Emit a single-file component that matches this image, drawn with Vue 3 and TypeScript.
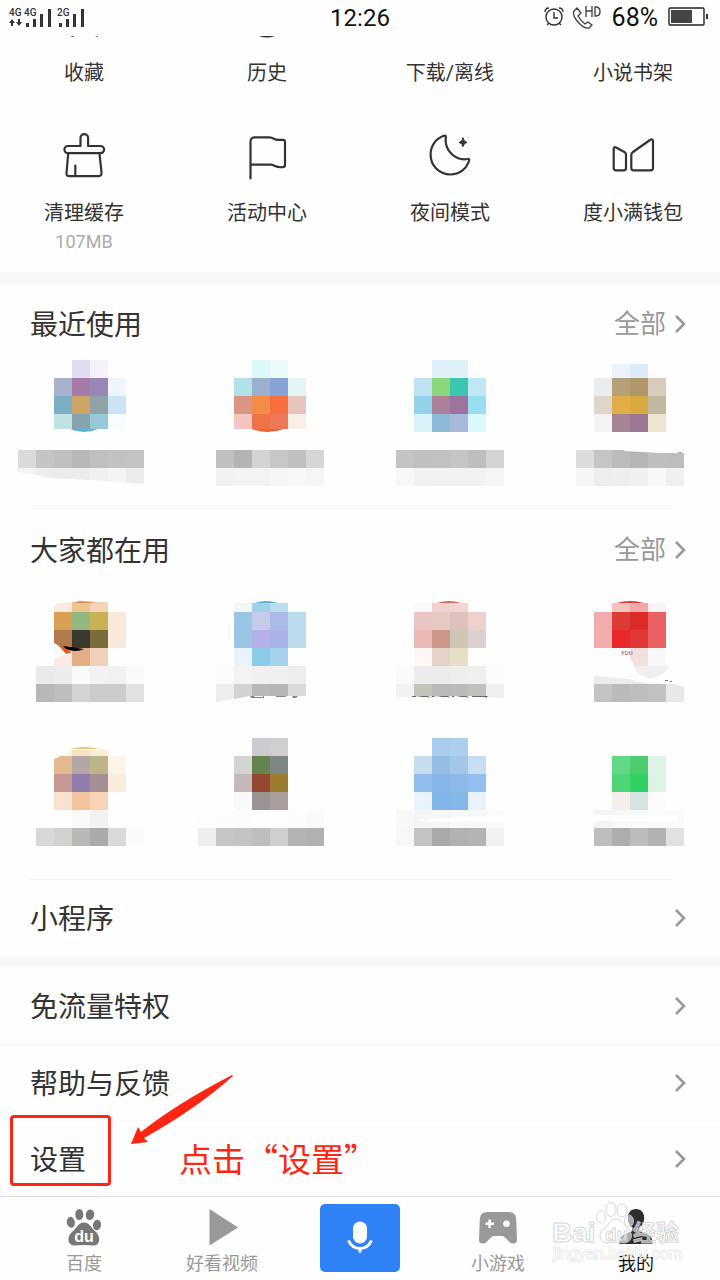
<script setup lang="ts">
interface Strip {
  row: number
  col: number
  colors: string[]
}
interface Mark {
  d: string
  fill: string
}
interface Tile {
  name: string
  strips: Strip[]
  marks?: Mark[]
  note?: string
}
const CELL = 18

function strip(row: number, col: number, colors: string): Strip {
  return { row, col, colors: colors.split(' ') }
}

const paper = '#fefefe'

const recent: Tile[] = [
  {
    name: 'recent-1',
    strips: [
      strip(0, 4, '#e1dcf3 #f5f3f9'),
      strip(1, 3, '#a8b2cc #a57aa7 #9886b5 #f0f4fd'),
      strip(2, 3, '#7cafc6 #cea365 #90a1a8 #cae4f4'),
      strip(3, 3, '#c2e1e3 #86a3af #96c8d7 #f7fcfe'),
      strip(5, 1, '#dadada #c4c4c4 #bfbfbf #b7b7b7 #bfbfbf #c2c2c2 #c3c3c3'),
      strip(6, 1, '#f3f3f3 #ededed #ececec #ebebeb #f0f0f0 #f4f4f4 #ececec'),
    ],
    marks: [
      { d: 'M54 69H126V73H54Z', fill: paper },
      { d: 'M70 69H98Q84 75 70 69Z', fill: '#4eb8e0' },
      { d: 'M18 112L34 114L48 118L90 120L144 124V127H18Z', fill: paper },
    ],
  },
  {
    name: 'recent-2',
    strips: [
      strip(0, 4, '#dcf9f9 #ebfbfc'),
      strip(1, 3, '#b2e2e7 #9cafcc #86a3d6 #e5f5f5'),
      strip(2, 3, '#d99684 #f48b46 #f56e3c #e4c4bd'),
      strip(3, 3, '#f4c5c1 #ef7346 #ef785b #faeee9'),
      strip(5, 2, '#c0c0c0 #b4b4b4 #d3d3d3 #c7c7c7 #c0c0c0 #d6d6d6'),
      strip(6, 2, '#f2f2f2 #f3f3f3 #f3f3f3 #f5f5f5 #f7f7f7 #f5f5f5'),
    ],
    marks: [
      { d: 'M54 69H126V73H54Z', fill: paper },
      { d: 'M72 69H104Q88 75 72 69Z', fill: '#ec633b' },
    ],
  },
  {
    name: 'recent-3',
    strips: [
      strip(0, 4, '#dff0f8 #e0f1f6'),
      strip(1, 3, '#bee2ef #8cd77e #3cc5b0 #c2e7f4'),
      strip(2, 3, '#93d2eb #ae7f98 #9b759f #98deee'),
      strip(3, 3, '#d9f3f8 #8bbad9 #a8badb #dcf8fa'),
      strip(5, 2, '#c4c4c4 #c0c0c0 #c1c1c1 #c5c5c5 #bebebe #d3d3d3'),
      strip(6, 2, '#f7f7f7 #f1f1f1 #f2f2f2 #f2f2f2 #f2f2f2 #f5f5f5'),
    ],
  },
  {
    name: 'recent-4',
    strips: [
      strip(0, 4, '#eaf2fb #dceafa'),
      strip(1, 3, '#ebecee #b5a077 #af9868 #d8cabd'),
      strip(2, 3, '#ded6cb #e0ad46 #d8a941 #c2b89e'),
      strip(3, 3, '#f4f3f2 #a78491 #9c7791 #ede5d1'),
      strip(5, 2, '#dcdcdc #c5c5c5 #bbbbbb #b5b5b5 #bebebe #bdbdbd'),
      strip(6, 2, '#f5f5f5 #ededed #eeeeee #f0f0f0 #f7f7f7 #f0f0f0'),
    ],
    marks: [
      { d: 'M72 0H108V4H72Z', fill: paper },
      { d: 'M84 90H144V93H120L84 91Z', fill: paper },
      { d: 'M139 92H141V93H139Z', fill: '#777' },
    ],
  },
]

const popular: Tile[] = [
  {
    name: 'popular-1',
    strips: [
      strip(0, 3, '#f9ebe2 #edc38e #f4d3b6'),
      strip(1, 3, '#d9a055 #93b77f #c8b254 #f9e9dd'),
      strip(2, 3, '#b17b4c #3a3a2d #7b6d3b #f9e9dd'),
      strip(3, 3, '#faebe4 #e3ad86 #f2d1ba'),
      strip(4, 2, '#eaeaea #ececec #f9fafa #f2f2f2 #f1f1f1 #f9f9f9'),
      strip(5, 2, '#b8b8b8 #bebebe #d3d3d3 #cbcbcb #cbcbcb #e1e1e1'),
    ],
    marks: [
      { d: 'M54 0H108V8H74L58 9L54 12Z', fill: paper },
      { d: 'M54 49L63 54L72 54V58L54 65Z', fill: paper },
      { d: 'M58 51L64 53L72 58L66 60Z', fill: '#e45e1f' },
      { d: 'M63 52L84 55Q76 59 66 55Z', fill: '#000' },
      { d: 'M74 9L79 7L96 8L91 9Z', fill: '#e48b4f' },
    ],
  },
  {
    name: 'popular-2',
    strips: [
      strip(0, 3, '#f1f9f8 #9fd2e9 #b9dded'),
      strip(1, 3, '#9bc5e4 #c7cbea #acbbe5 #badced'),
      strip(2, 3, '#9bc5e4 #b5b0e9 #aab3e8 #badced'),
      strip(3, 3, '#e7f4fb #8bcbe8 #a5d2ed'),
      strip(4, 2, '#fbfbfb #f4f3f4 #f1f0ef #f1f0f1 #ebeeed'),
      strip(5, 2, '#ededed #d2d2d2 #b8b8b8 #b6b6b6 #d9d9d9'),
    ],
    marks: [
      { d: 'M54 0H108V9H54Z', fill: paper },
      { d: 'M75 9Q86 5 98 9Z', fill: '#5cb0cb' },
      { d: 'M36 108L54 105L70 102H126V108Z', fill: paper },
      { d: 'M70 102H74L75 103H83V102H84V104H71ZM88 103H96V102H106V103H88ZM112 102H118L116 104H113Z', fill: '#888' },
    ],
  },
  {
    name: 'popular-3',
    strips: [
      strip(0, 3, '#fafafa #f0d0cf #f1d5d0'),
      strip(1, 3, '#ebc5c3 #e5c9c2 #ddc1bd #efd1cc'),
      strip(2, 3, '#eab9b5 #cc9688 #cdc6b6 #dcd1cf'),
      strip(3, 3, '#fdf8f5 #e5d3c7 #e6dec5'),
      strip(4, 2, '#fafafa #ebecec #eaebeb #eeeeee #efefef #fbfbfb'),
      strip(5, 2, '#f1f1f1 #c2c3bd #b9b9b9 #bababa #c0c0bd #efefef'),
    ],
    marks: [
      { d: 'M54 0H108V9H54Z', fill: paper },
      { d: 'M77 9Q89 5 101 9Z', fill: '#cb6e61' },
      { d: 'M36 103L108 102L144 104V108H36Z', fill: paper },
      { d: 'M52 102H56V103H52ZM58 103L62 102H68L70 104L67 103H62ZM72 102H74V103H72ZM78 103L82 102H88L90 104L87 103H82ZM92 102H94V103H92ZM97 103L101 102H107L109 104L106 103H101ZM112 102H128L126 104L125 103H112Z', fill: '#666' },
    ],
  },
  {
    name: 'popular-4',
    strips: [
      strip(0, 4, '#f4c3c1 #f1a9a8 #f9f3f1'),
      strip(1, 3, '#f2acae #dc3b36 #dc2b28 #e96261'),
      strip(2, 3, '#f2acae #e8282b #e33838 #e96261'),
      strip(3, 5, '#f1e0e0 #f8f8f8'),
      strip(4, 3, '#ebebec #ebebeb #ebebec #efefef'),
      strip(5, 3, '#c2c3c5 #b9babc #bcbdbf #c2c2c4 #e8e8e8'),
    ],
    marks: [
      { d: 'M54 0H126V9H54Z', fill: paper },
      { d: 'M76 9Q91 5 104 9Z', fill: '#dc3d3b' },
      { d: 'M90 54V63L96 77Q109 90 126 77V90L97 88L90 85L54 82V54Z', fill: paper },
      { d: 'M90 54H108V72H96Z', fill: '#f1e0e0' },
      { d: 'M94 72H130Q114 93 98 78Z', fill: '#efefef' },
      { d: 'M126 90H144V93L136 90Z', fill: paper },
      { d: 'M125 86H128V87H125ZM130 87H132V88H130Z', fill: '#777' },
    ],
    note: 'YOU',
  },
  {
    name: 'popular-5',
    strips: [
      strip(0, 3, '#fff7ed #f6e2be #faedd6'),
      strip(1, 3, '#e5b98f #b4a5a6 #bdb489 #fcf3eb'),
      strip(2, 3, '#c69896 #927cab #a58f94 #f9ecdd'),
      strip(3, 3, '#f7e3d0 #f1c49d #f6d4b5'),
      strip(4, 4, '#f9f9f9 #f2f2f1'),
      strip(5, 2, '#d8d8d6 #d2d2cf #b8b8b8 #aaaaaa #d9d9d9 #fafafa'),
    ],
    marks: [
      { d: 'M54 0H108V12H70L57 20L54 21Z', fill: paper },
      { d: 'M70 11Q84 7 100 11Z', fill: '#e6c47b' },
    ],
  },
  {
    name: 'popular-6',
    strips: [
      strip(0, 4, '#cbcccf #cfcfcf'),
      strip(1, 3, '#d4d5d0 #64834f #7e8784'),
      strip(2, 3, '#c5b8b8 #944831 #9b7c31'),
      strip(3, 3, '#f9f9fa #9b9495 #aa9d9d'),
      strip(4, 1, '#fdfdfd #fcfcfc #fcfcfc #fdfdfd #fdfdfd #fcfcfc #fafafa'),
      strip(5, 1, '#eeeeee #c6c6c6 #c4c4c4 #bebebe #cfcfcf #b3b3b3 #b1b1b1'),
    ],
  },
  {
    name: 'popular-7',
    strips: [
      strip(0, 4, '#a9cdef #accff0'),
      strip(1, 3, '#c6dded #95bee4 #a4c6e9 #c7ddf1'),
      strip(2, 3, '#91beed #88b5e9 #8cb9e5 #92bff0'),
      strip(3, 3, '#e9f3fb #82b6e8 #84b6e8 #e9f3fb'),
      strip(4, 2, '#f8f8f8 #f5f5f5 #f5f5f5 #f8f8f8 #f8f8f8 #fafafa'),
      strip(5, 2, '#f7f7f7 #c3c3c3 #a9a9a9 #b1b1b1 #b4b4b4 #f1f1f1'),
    ],
    marks: [{ d: 'M54 82L144 77V83L72 84Z', fill: paper }],
  },
  {
    name: 'popular-8',
    strips: [
      strip(1, 4, '#60d985 #4dce6e #dff4e6'),
      strip(2, 4, '#4dd577 #30d160 #dcf3e5'),
      strip(3, 4, '#f4efed #d6e5e1 #fcfcfc'),
      strip(4, 3, '#f4f4f4 #f8f8f8 #f9f9f9 #fafafa #fafafa'),
      strip(5, 3, '#bebebe #adadad #bcbcbc #b2b2b2 #e0e2e1'),
    ],
    marks: [{ d: 'M36 79L54 77H138V83H36Z', fill: paper }],
  },
]

const sections = [
  { title: '最近使用', more: '全部', tiles: recent, rows: 7, kind: 'recent' },
  { title: '大家都在用', more: '全部', tiles: popular, rows: 6, kind: 'popular' },
]
const services = ['免流量特权', '帮助与反馈', '设置']
</script>

<template>
  <div class="page">
    <header class="status">
      <svg class="signal" viewBox="0 0 90 36" aria-label="4G 4G 2G">
        <g fill="#333">
          <text x="9" y="16" font-size="10">4G</text>
          <text x="24" y="16" font-size="10">4G</text>
          <text x="57" y="16" font-size="10">2G</text>
          <path d="M12 19l3 4h-2v3h-2v-3h-2zM19 26l-3-4h2v-3h2v3h2z" />
          <path d="M26 23h3v4h-3zM33 19h3v8h-3zM40 14h3v13h-3zM48 9h3v18h-3z" />
          <path d="M59 23h3v4h-3zM66 19h3v8h-3zM73 14h3v13h-3zM81 9h3v18h-3z" />
        </g>
      </svg>
      <time class="clock">12:26</time>
      <div class="device">
        <svg width="20" height="22" viewBox="0 0 20 22" fill="none" stroke="#333" stroke-width="1.4">
          <circle cx="10" cy="11" r="8" />
          <path d="M10 6v6h4M1 6Q1 2 5 2M15 2q4 0 4 4M5 17l-2 2M15 17l2 2" />
        </svg>
        <svg width="30" height="24" viewBox="0 0 30 24" fill="none" stroke="#444" stroke-width="1.4">
          <path d="M2 6L5 3L9 8L6 11Q9 16 13 19L16 17L20 20L17 23Q12 24 6 17Q0 10 2 6Z" stroke-linejoin="round" />
          <path d="M14 1v11M20 1v11M14 6h6M23 2v9h1q4 0 4-4.500t-4-4.500z" />
        </svg>
        <span class="percent">68%</span>
        <svg width="42" height="20" viewBox="0 0 42 20">
          <rect x="1" y="1" width="35" height="17" rx="1" fill="none" stroke="#222" stroke-width="1.4" />
          <rect x="3" y="3" width="21" height="13" fill="#444" />
          <path d="M38 7h2v5h-2z" fill="#333" />
        </svg>
      </div>
    </header>

    <main>
      <nav class="shortcuts trimmed" aria-label="收藏与历史">
        <button type="button">
          <svg width="48" height="3" viewBox="0 0 48 3"><path d="M11 0l4 0-3 1zM35 0h3l0 1z" fill="#333" /></svg>
          <span>收藏</span>
        </button>
        <button type="button">
          <svg width="48" height="3" viewBox="0 0 48 3"><path d="M16 0H32Q24 3 16 0Z" fill="#333" /></svg>
          <span>历史</span>
        </button>
        <button type="button"><svg width="48" height="3" viewBox="0 0 48 3" /><span>下载/离线</span></button>
        <button type="button"><svg width="48" height="3" viewBox="0 0 48 3" /><span>小说书架</span></button>
      </nav>

      <nav class="shortcuts" aria-label="常用功能">
        <button type="button">
          <svg class="line-icon" viewBox="0 0 48 48">
            <path d="M20.500 14V6a3.800 3.800 0 0 1 7.600 0V14H40.500a3.600 3.600 0 0 1 0 7.200H8a3.600 3.600 0 0 1 0-7.200Z" />
            <path d="M8.200 21.500L6.500 41Q6.300 44.200 9.500 44.200H38Q41.800 44.200 41.500 40.500L39.500 21.500M15.300 33.500V44" />
          </svg>
          <span>清理缓存</span>
          <small>107MB</small>
        </button>
        <button type="button">
          <svg class="line-icon" viewBox="0 0 48 48">
            <path d="M7.500 46.500V10Q7.500 5.300 12 5.300H26Q29 5.300 31 6.800Q33 8 36 7.800H40Q42 7.800 42 10V33Q42 35.200 39.500 35.200Q35 35.500 32 34L29 32.700H8" />
          </svg>
          <span>活动中心</span>
        </button>
        <button type="button">
          <svg class="line-icon" viewBox="0 0 48 48">
            <path d="M19.800 4.800Q20 3 17.800 3.800C9 7 4.600 14.500 4.600 22.500C4.600 34 13.500 42.500 24.500 42.500C33.500 42.500 40.500 37 43.100 28.500Q43.600 26.500 41.500 27C30 29 18 19 19.800 4.800Z" />
            <path d="M37 6Q37.600 9.800 41 10.400Q37.600 11 37 14.700Q36.400 11 33 10.400Q36.400 9.800 37 6Z" fill="#333" stroke-width="1" />
          </svg>
          <span>夜间模式</span>
        </button>
        <button type="button">
          <svg class="line-icon" viewBox="0 0 48 48">
            <path d="M4.700 17Q4.700 14.500 7 15.500L15.400 20Q17 21 17 22.500V36Q17 38.300 14.700 38.300H7Q4.700 38.300 4.700 36Z" />
            <path d="M22.300 23Q22.300 21 24 20L41 8Q44 6.300 44 9.500V36Q44 38.300 41.700 38.300H24.600Q22.300 38.300 22.300 36Z" />
          </svg>
          <span>度小满钱包</span>
        </button>
      </nav>

      <div class="band"></div>

      <section v-for="s in sections" :key="s.kind" :class="['apps', s.kind]">
        <div class="head">
          <h2>{{ s.title }}</h2>
          <button type="button" class="more">
            {{ s.more }}
            <svg class="chevron" viewBox="0 0 12 22"><path d="M2 3L10 11L2 19" /></svg>
          </button>
        </div>
        <div class="tiles">
          <svg v-for="t in s.tiles" :key="t.name" width="180" :height="s.rows * CELL" :viewBox="`0 0 180 ${s.rows * CELL}`">
            <g v-for="(st, i) in t.strips" :key="i" shape-rendering="crispEdges">
              <rect
                v-for="(c, j) in st.colors"
                :key="j"
                :x="(st.col + j) * CELL"
                :y="st.row * CELL"
                :width="CELL"
                :height="CELL"
                :fill="c"
              />
            </g>
            <path v-for="(m, i) in t.marks" :key="`m${i}`" :d="m.d" :fill="m.fill" />
            <text v-if="t.note" x="81" y="61" font-size="6" fill="#a33">{{ t.note }}</text>
          </svg>
        </div>
      </section>

      <button type="button" class="row programs">
        <span>小程序</span>
        <svg class="chevron" viewBox="0 0 12 22"><path d="M2 3L10 11L2 19" /></svg>
      </button>
      <div class="band thin"></div>

      <div class="services">
        <button v-for="name in services" :key="name" type="button" class="row">
          <span>{{ name }}</span>
          <svg class="chevron" viewBox="0 0 12 22"><path d="M2 3L10 11L2 19" /></svg>
        </button>
        <div class="frame"></div>
        <svg class="arrow" viewBox="0 0 104 72">
          <path d="M1 69L8 52L11 57Q46 29 102 0L103 1Q66 34 14 63L18 67Z" fill="#ff2512" />
        </svg>
        <p class="hint">点击“设置”</p>
      </div>
    </main>

    <footer class="tabs">
      <button type="button">
        <svg class="tab-icon" viewBox="0 0 40 40" fill="#777">
          <ellipse cx="6.800" cy="15.300" rx="4" ry="5.500" transform="rotate(-10 6.8 15.3)" />
          <ellipse cx="15.300" cy="7.500" rx="4" ry="5.600" />
          <ellipse cx="26" cy="7.800" rx="4.200" ry="5.400" transform="rotate(10 26 7.8)" />
          <ellipse cx="33" cy="18" rx="4" ry="5.300" transform="rotate(10 33 18)" />
          <path d="M20 15.500C14 15.500 13 21 8 25C2 30 4 38.500 10 38.500Q20 37.500 30 38.500C36 38.500 37 30 32 25C27 21 26 15.500 20 15.500Z" />
          <text x="20" y="35" class="du" text-anchor="middle">du</text>
        </svg>
        <span>百度</span>
      </button>
      <button type="button">
        <svg class="tab-icon" viewBox="0 0 40 40"><path d="M7.500 2L36 20.500L7.500 38.500Z" fill="#999" /></svg>
        <span>好看视频</span>
      </button>
      <button type="button" class="mic" aria-label="语音">
        <svg width="40" height="40" viewBox="0 0 40 40">
          <rect x="13" y="3.500" width="14" height="22" rx="7" fill="#fff" />
          <path d="M8.500 22.500Q12 30.500 20 30.500Q28 30.500 31.500 22.500M20 30V34.500" fill="none" stroke="#fff" stroke-width="3" />
        </svg>
      </button>
      <button type="button">
        <svg class="tab-icon" viewBox="0 0 40 40">
          <path d="M9 5H31Q37.500 5 38.200 12L39 33Q39 36.500 35 36.500Q32 36.500 30 33.500Q26 29 24.500 29H15.500Q14 29 10 33.500Q8 36.500 5 36.500Q1 36.500 1 33L1.800 12Q2.500 5 9 5Z" fill="#999" />
          <path d="M11.700 12.500V21M7.500 16.700H16" stroke="#fff" stroke-width="2.600" />
          <circle cx="28.500" cy="16.700" r="3.300" fill="#fff" />
        </svg>
        <span>小游戏</span>
      </button>
      <button type="button" class="active">
        <svg class="tab-icon" viewBox="0 0 40 40" fill="#2d2d2d">
          <path d="M20 2C14.500 2 11.800 6 11.800 11C11.800 15.500 14 19 16.500 20.500V24L7 28Q3.500 30 3.500 37H36.500Q36.500 30 33 28L23.500 24V20.500C26 19 28.200 15.500 28.200 11C28.200 6 25.500 2 20 2Z" />
        </svg>
        <span>我的</span>
      </button>
      <svg class="watermark" viewBox="0 0 140 70" aria-hidden="true">
        <g fill="#fff" fill-opacity=".6" stroke="#ccc" stroke-opacity=".8">
          <ellipse cx="56" cy="19" rx="4.500" ry="6" />
          <ellipse cx="66" cy="11.500" rx="5" ry="7" />
          <ellipse cx="77" cy="12.500" rx="5" ry="6.500" />
          <ellipse cx="84" cy="23" rx="4.500" ry="6" />
          <path d="M71 21C65 21 64 27 60 30C52 34 54 45 63 45Q71 43 78 45C88 45 89 35 82 30C78 27 77 21 71 21Z" />
          <text x="7" y="44" class="wm-brand">Bai</text>
          <text x="60" y="43" class="wm-du">du</text>
          <text x="88" y="43" class="wm-cjk">经验</text>
        </g>
        <text x="8" y="61" class="wm-url">jingyan.baidu.com</text>
      </svg>
    </footer>
  </div>
</template>

<style>
body {
  background: #fefefe;
}
</style>

<style scoped>
.page {
  min-height: 100vh;
  display: flex;
  flex-direction: column;
  background: #fefefe;
  color: #333;
  font-family: Roboto, "Noto Sans CJK SC", sans-serif;
}
main {
  flex: 1;
}
button {
  border: 0;
  padding: 0;
  margin: 0;
  background: none;
  font: inherit;
  color: inherit;
}
svg {
  display: block;
  flex: none;
}
.status {
  height: 36px;
  display: grid;
  grid-template-columns: 1fr auto 1fr;
  align-items: center;
  color: #111;
  font-size: 24px;
  line-height: 36px;
}
.signal {
  width: 90px;
  height: 36px;
  font-weight: 500;
}
.device {
  display: flex;
  justify-content: flex-end;
  align-items: center;
  padding-right: 10px;
}
.device svg {
  margin-bottom: 2px;
}
.device svg + svg {
  margin-left: 8px;
}
.percent {
  margin: 0 10px;
  font-size: 25px;
}
.shortcuts {
  display: flex;
  justify-content: space-between;
  padding: 46px 32px 16px 29px;
}
.shortcuts.trimmed {
  padding-top: 0;
  padding-bottom: 0;
}
.shortcuts button {
  width: 110px;
  display: flex;
  flex-direction: column;
  align-items: center;
  font-size: 20px;
  line-height: 28px;
}
.shortcuts span {
  margin-top: 19px;
  white-space: nowrap;
}
.shortcuts small {
  margin-top: 3px;
  font-size: 18px;
  line-height: 24px;
  color: #aaa;
}
.trimmed span {
  margin-top: 20px;
}
.trimmed + .shortcuts {
  padding-top: 45px;
}
.line-icon {
  width: 48px;
  height: 48px;
  fill: none;
  stroke: #333;
  stroke-width: 2.2;
  stroke-linecap: round;
  stroke-linejoin: round;
}
.band {
  height: 16px;
  background: linear-gradient(#fefefe, #f6f6f6 25%, #f6f6f6 70%, #fefefe);
}
.band.thin {
  height: 12px;
}
.head {
  height: 40px;
  padding: 0 34px 0 30px;
  display: flex;
  justify-content: space-between;
  align-items: center;
}
.head h2,
.row span {
  margin: 0;
  padding-top: 4px;
  font-size: 28px;
  font-weight: 400;
  line-height: 40px;
}
.more {
  display: flex;
  align-items: center;
  gap: 8px;
  color: #999;
  font-size: 26px;
  line-height: 40px;
}
.chevron {
  width: 12px;
  height: 22px;
  fill: none;
  stroke: #999;
  stroke-width: 2.6;
}
.tiles {
  display: grid;
  grid-template-columns: repeat(4, 1fr);
  justify-items: center;
  row-gap: 36px;
}
.recent {
  padding-top: 18px;
}
.recent .tiles {
  padding: 16px 0 19px;
}
.recent::after {
  content: "";
  display: block;
  height: 6px;
  margin: 0 48px 0 32px;
  background: repeating-linear-gradient(#f5f6f9 0 1px, #fefefe 1px 3px);
}
.popular {
  padding-top: 19px;
}
.popular .tiles {
  padding: 24px 0 33px;
}
.popular::after {
  content: "";
  display: block;
  height: 1px;
  margin: 0 48px 0 30px;
  background: #f3f3f5;
}
.row {
  width: 100%;
  height: 76px;
  padding: 0 34px 0 30px;
  display: flex;
  justify-content: space-between;
  align-items: center;
  text-align: left;
}
.services {
  position: relative;
}
.services .row + .row {
  border-top: 1px solid #f8f8f8;
}
.frame {
  position: absolute;
  left: 10px;
  bottom: 10px;
  width: 95px;
  height: 65px;
  border: 3px solid #ff2512;
  border-radius: 4px;
}
.arrow {
  position: absolute;
  left: 130px;
  bottom: 49px;
  width: 104px;
  height: 72px;
}
.hint {
  position: absolute;
  left: 179px;
  bottom: 14px;
  margin: 0;
  color: #ff2512;
  font-family: "Noto Sans CJK SC", sans-serif;
  font-size: 33px;
  line-height: 48px;
}
.tabs {
  position: relative;
  height: 83px;
  border-top: 1px solid #ddd;
  padding: 0 15px;
  display: grid;
  grid-template-columns: repeat(5, 1fr);
  justify-items: center;
  color: #999;
}
.tabs button {
  padding-top: 10px;
  display: flex;
  flex-direction: column;
  align-items: center;
  gap: 5px;
  font-size: 18px;
  line-height: 24px;
}
.tab-icon {
  width: 40px;
  height: 40px;
}
.tabs .active {
  color: #111;
}
.tabs .mic {
  width: 80px;
  height: 68px;
  margin-top: 7px;
  padding: 0;
  justify-content: center;
  border-radius: 5px;
  background: #3083f7;
}
.du {
  font-family: "Liberation Sans", sans-serif;
  font-size: 16px;
  font-weight: 700;
  fill: #fff;
}
.watermark {
  position: absolute;
  right: 35px;
  bottom: 12px;
  width: 140px;
  height: 70px;
  pointer-events: none;
  font-family: "Liberation Sans", "Noto Sans CJK SC", sans-serif;
  font-weight: 700;
}
.wm-brand {
  font-size: 28px;
}
.wm-du {
  font-size: 19px;
}
.wm-cjk {
  font-size: 23px;
}
.wm-url {
  font-size: 16px;
  font-weight: 400;
  fill: #fff;
  fill-opacity: 0.8;
  stroke: #ccc;
  stroke-opacity: 0.6;
  paint-order: stroke;
}
</style>
